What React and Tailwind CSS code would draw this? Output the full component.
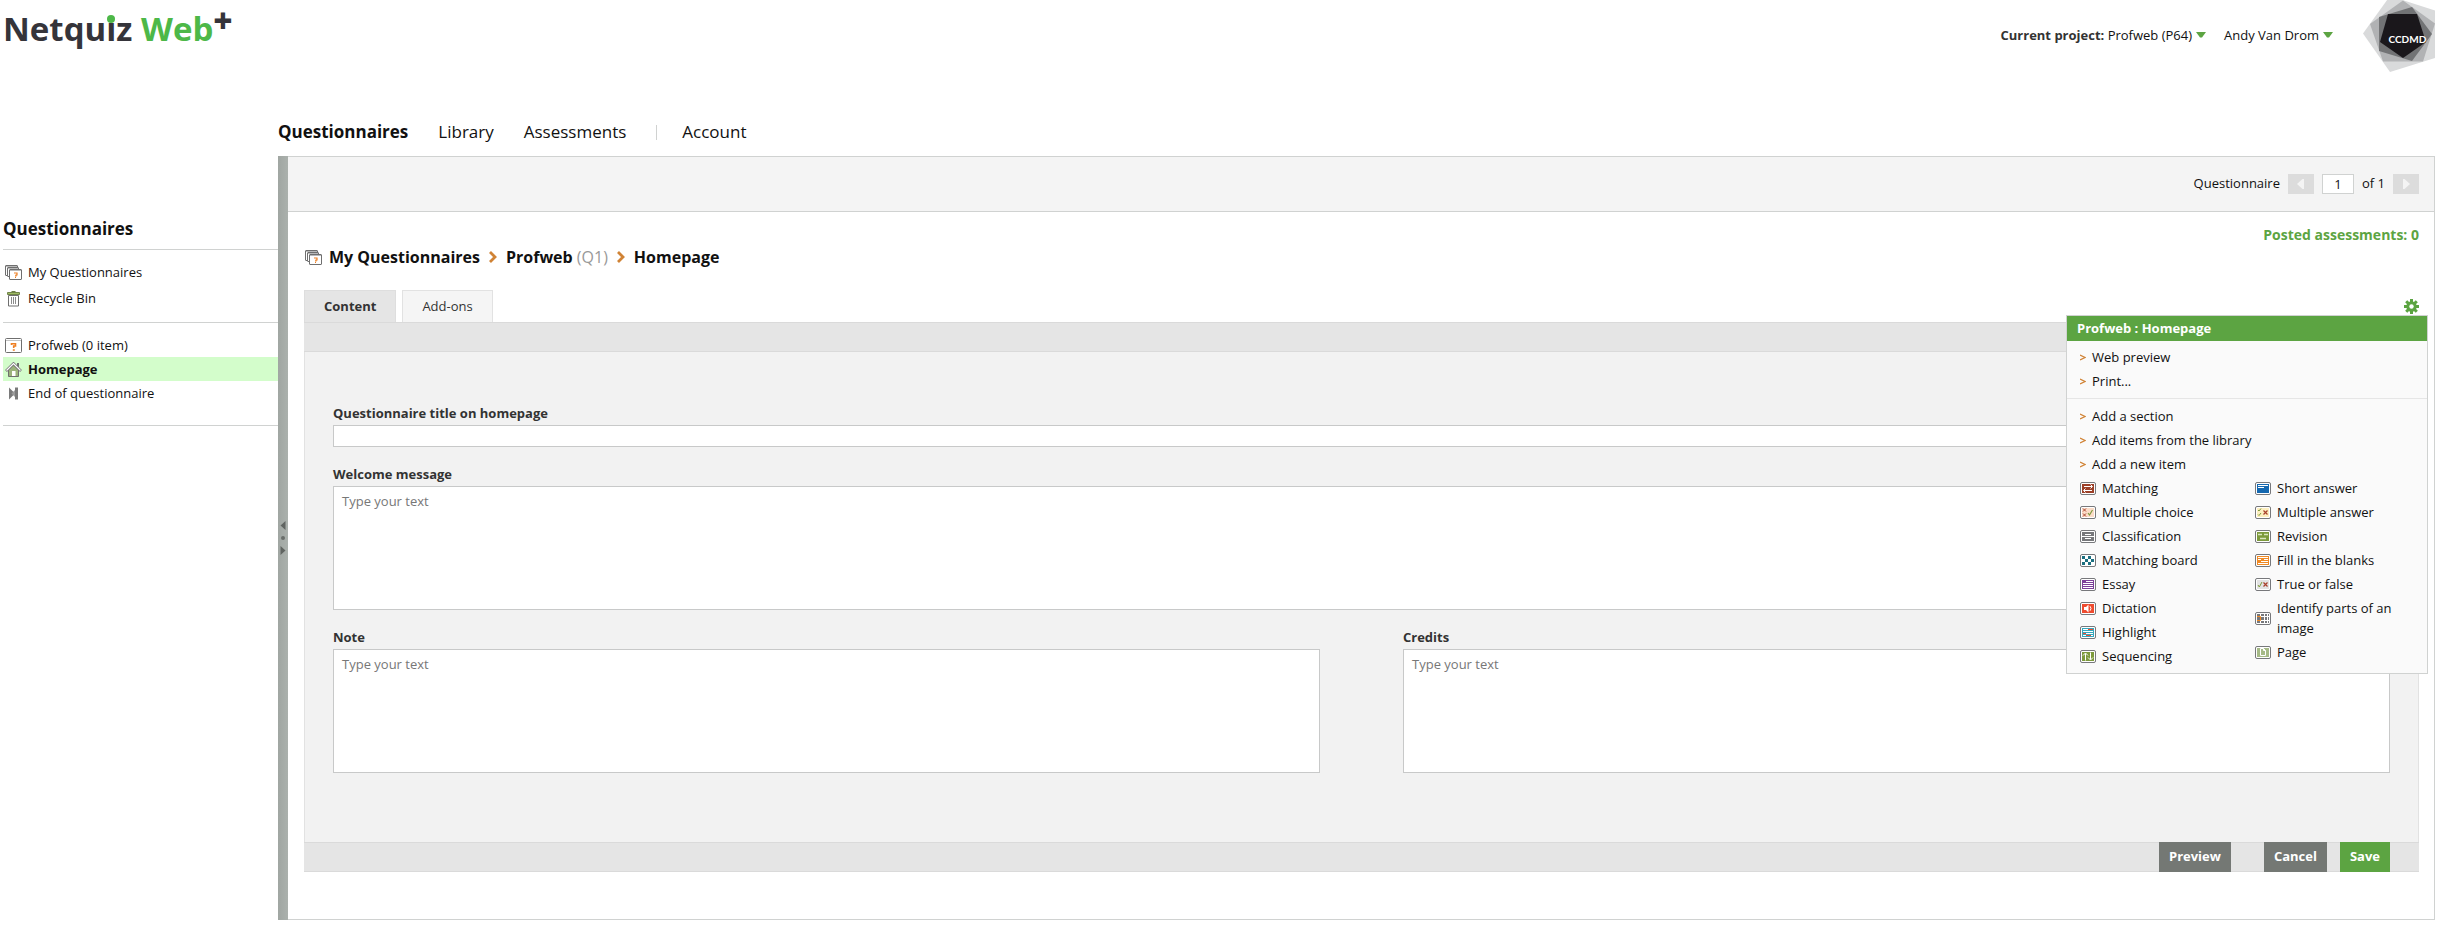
const link = 'flex items-center gap-[6px] pl-[2px] text-[13px] hover:underline'

function StackIcon() {
  return (
    <svg width="17" height="15" viewBox="0 0 17 15" className="shrink-0" aria-hidden="true">
      <g fill="#fff" stroke="#6f6f6f">
        <rect x="0.5" y="0.5" width="12" height="10" rx="0.5" />
        <rect x="2.5" y="2.5" width="11" height="9" rx="0.5" />
        <rect x="4.5" y="4.5" width="12" height="10" rx="0.5" />
      </g>
      <path d="M1 1.5h11M3 3.5h10M5 5.5h11" stroke="#b9b9b9" />
      <path d="M9 8h3v2h-1v1h-1M10 12.5h1" fill="none" stroke="#ee7f22" strokeWidth="1.2" />
    </svg>
  )
}

function BinIcon() {
  return (
    <svg width="17" height="17" viewBox="0 0 17 17" className="shrink-0" aria-hidden="true">
      <path d="M3.5 5.5h10v10.500h-10z" fill="#fff" stroke="#6f6f6f" />
      <path d="M6.500 1.500h4" stroke="#6c7f45" />
      <path d="M2.500 2.500h12v2h-12z" fill="#9fbb63" stroke="#71854a" />
      <path d="M6.500 7v7M8.500 7v7M10.500 7v7" stroke="#8c8c8c" />
    </svg>
  )
}

function QuizIcon() {
  return (
    <svg width="17" height="15" viewBox="0 0 17 15" className="shrink-0" aria-hidden="true">
      <rect x="0.5" y="0.5" width="16" height="14" rx="1" fill="#fff" stroke="#6f6f6f" />
      <path d="M1 2.5h15" stroke="#c4c4c4" strokeWidth="1" />
      <path d="M6.5 7V5.700h4V8H8.700v2M7.800 12h2" fill="none" stroke="#ee7f22" strokeWidth="1.6" />
    </svg>
  )
}

function HouseIcon() {
  return (
    <svg width="17" height="15" viewBox="0 0 17 15" className="shrink-0" aria-hidden="true">
      <path d="M13 1v5" stroke="#6f6f6f" strokeWidth="2" />
      <path d="M3.500 8L8.500 3l5 5v6.500h-10z" fill="#9bb37b" stroke="#6f6f6f" />
      <path d="M1 9L8.500 1.500 16 9" fill="none" stroke="#777" strokeWidth="2.600" />
      <path d="M1.500 8.500L8.500 1.600l7 6.900" fill="none" stroke="#fff" strokeWidth="1.200" />
      <rect x="7" y="9" width="3.500" height="5" fill="#fff" />
    </svg>
  )
}

function EndIcon() {
  return (
    <svg width="17" height="13" viewBox="0 0 17 13" className="shrink-0" aria-hidden="true">
      <path d="M4 0.5L10 6.5 4 12.5z" fill="#7a7a7a" />
      <path d="M10 3L6.5 6.5 10 10z" fill="#9a9a9a" />
      <path d="M10 0.5h3v12h-3z" fill="#7a7a7a" />
    </svg>
  )
}

function Caret() {
  return (
    <svg width="10" height="6" viewBox="0 0 10 6" aria-hidden="true">
      <path d="M0 0h10L6 5.5H4z" fill="#5ca442" />
    </svg>
  )
}

function Gear() {
  return (
    <svg width="15" height="15" viewBox="0 0 15 15" aria-hidden="true">
      <g stroke="#5ca442" strokeWidth="3">
        <path d="M7.5 0v15M0 7.5h15M2.2 2.2l10.6 10.6M12.8 2.2L2.2 12.8" />
      </g>
      <circle cx="7.5" cy="7.5" r="5.200" fill="#5ca442" />
      <circle cx="7.5" cy="7.5" r="2.200" fill="#fff" />
    </svg>
  )
}

function Crumb() {
  return (
    <svg width="8" height="12" viewBox="0 0 8 12" aria-hidden="true">
      <path d="M1 1l5 5-5 5" fill="none" stroke="#d08335" strokeWidth="2.8" />
    </svg>
  )
}

function BrandLogo() {
  return (
    <svg width="72" height="72" viewBox="0 0 72 72" className="shrink-0" role="img" aria-label="CCDMD">
      <path d="M0 33.5L27 -4 72 10.500V58L27 72z" fill="#d9dadb" />
      <path d="M7 24L40 0.500 72 23.500 60 61.500H20z" fill="#b1b2b4" />
      <path d="M16 17L49 7 69 34 49 61 16 51z" fill="#727375" />
      <path d="M25 14H54L63 42 40 58 17 42z" fill="#1a171b" />
      <text x="25.500" y="43" fill="#fff" fontFamily="Lato, sans-serif" fontWeight="700" fontSize="10">CCDMD</text>
    </svg>
  )
}

const art = {
  matching: (
    <>
      <rect x="2" y="2" width="12" height="9" fill="#9c3f27" />
      <path d="M4 4.500h8M10.500 2.500l2 2-2 2M12 8.500H4M5.500 6.500l-2 2 2 2" fill="none" stroke="#fff" />
    </>
  ),
  choice: (
    <>
      <rect x="2" y="2" width="12" height="9" fill="#fbdcc8" />
      <path d="M3 2.500l3 3M6 2.500l-3 3M3 7.500l3 3M6 7.500l-3 3" stroke="#a8402c" />
      <path d="M8 7l1.500 2L12.500 4" fill="none" stroke="#7d9a3c" strokeWidth="1.200" />
    </>
  ),
  classification: (
    <>
      <rect x="2" y="2" width="12" height="9" fill="#77787b" />
      <path d="M2 6.500h12" stroke="#fff" />
      <path d="M5 4.500h6M5 8.500h6" stroke="#fff" />
    </>
  ),
  board: (
    <>
      <rect x="2" y="2" width="12" height="9" fill="#fff" />
      <path d="M2 2h3v3H2zM8 2h3v3H8zM5 5h3v3H5zM11 5h3v3h-3zM2 8h3v3H2zM8 8h3v3H8z" fill="#1b6f80" />
    </>
  ),
  essay: (
    <>
      <rect x="2" y="2" width="12" height="9" fill="#7c3f98" />
      <path d="M6 3.500h7M3 5.500h10M3 7.500h10M3 9.500h10" stroke="#fff" />
    </>
  ),
  dictation: (
    <>
      <rect x="2" y="2" width="12" height="9" fill="#ee4b2f" />
      <path d="M4 5h2l2.500-2.500v8L6 8H4z" fill="#fff" />
      <path d="M10 4.200q2 2.300 0 4.600" fill="none" stroke="#fff" />
    </>
  ),
  highlight: (
    <>
      <rect x="2" y="2" width="12" height="9" fill="#35a7bd" />
      <path d="M3 3.500h5M3 5.500h10M6 7.500h7M3 9.500h10" stroke="#fff" />
      <path d="M8 3.500h5M3 7.500h3M6 9.500h5" stroke="#ee4b2f" />
    </>
  ),
  sequencing: (
    <>
      <rect x="2" y="2" width="12" height="9" fill="#7d9a3c" />
      <path d="M5.500 10.500v-7M3 5.500l2.500-2.500L8 5.500M10.500 2.500v7M8 7.500l2.500 2.500L13 7.500" fill="none" stroke="#fff" />
    </>
  ),
  short: (
    <>
      <rect x="2" y="2" width="12" height="9" fill="#1468b0" />
      <path d="M3 3.500h10M3 5.500h6" stroke="#fff" />
    </>
  ),
  multi: (
    <>
      <rect x="2" y="2" width="12" height="9" fill="#fdefc0" />
      <path d="M3 4l1 1 2-2.500M3 8.500l1 1L6 7" fill="none" stroke="#7d9a3c" />
      <path d="M8.500 4.500l4 4M12.500 4.500l-4 4" stroke="#a8402c" strokeWidth="1.200" />
    </>
  ),
  revision: (
    <>
      <rect x="2" y="2" width="12" height="9" fill="#7d9a3c" />
      <path d="M3 4.500h4M9 4.500h4M5 8.500h6" stroke="#dbe6c0" strokeWidth="1.600" />
    </>
  ),
  blanks: (
    <>
      <rect x="2" y="2" width="12" height="9" fill="#f08a24" />
      <path d="M3 3.500h10M3 5.500h3M6 7.500h7M3 9.500h10M9 5.500h4" stroke="#fff" />
    </>
  ),
  truth: (
    <>
      <rect x="2" y="2" width="12" height="9" fill="#e3e3e3" />
      <path d="M3 7l1.300 2L7 4" fill="none" stroke="#7d9a3c" />
      <path d="M8.500 4.500l4 4M12.500 4.500l-4 4" stroke="#a8402c" strokeWidth="1.200" />
    </>
  ),
  parts: (
    <>
      <rect x="2" y="2" width="12" height="9" fill="#77787b" />
      <path d="M2 4.500h12M2 8.500h12M5.500 2v9M9.500 2v9M12.500 2v9" stroke="#fff" />
      <path d="M2 4.500h3.500v4H2" fill="none" stroke="#f08a24" />
    </>
  ),
  page: (
    <>
      <rect x="2" y="2" width="12" height="9" fill="#a5b986" />
      <path d="M5.500 2.500h3l2 2v5h-5z" fill="#a5b986" stroke="#fff" />
      <path d="M8.500 2.500v2h2" fill="none" stroke="#fff" />
    </>
  ),
}

const leftItems = [
  ['matching', 'Matching'],
  ['choice', 'Multiple choice'],
  ['classification', 'Classification'],
  ['board', 'Matching board'],
  ['essay', 'Essay'],
  ['dictation', 'Dictation'],
  ['highlight', 'Highlight'],
  ['sequencing', 'Sequencing'],
]
const rightItems = [
  ['short', 'Short answer'],
  ['multi', 'Multiple answer'],
  ['revision', 'Revision'],
  ['blanks', 'Fill in the blanks'],
  ['truth', 'True or false'],
  ['parts', 'Identify parts of an image'],
  ['page', 'Page'],
]

function ItemList({ items }) {
  return (
    <ul>
      {items.map(([kind, name]) => (
        <li key={kind}>
          <a href="#" className="flex items-center gap-[6px] py-[2px] hover:underline">
            <svg width="16" height="13" viewBox="0 0 16 13" className="shrink-0" aria-hidden="true">
              <rect x="0.500" y="0.500" width="15" height="12" rx="1.500" fill="#fff" stroke="#77787b" />
              {art[kind]}
            </svg>
            <span>{name}</span>
          </a>
        </li>
      ))}
    </ul>
  )
}

function MenuLink({ children }) {
  return (
    <li>
      <a href="#" className="flex items-center gap-[6px] py-[2px] leading-[20px] hover:underline">
        <svg width="6" height="7" viewBox="0 0 6 7" aria-hidden="true">
          <path d="M0 1l5 2.500L0 6" fill="none" stroke="#d08335" strokeWidth="1.300" />
        </svg>
        {children}
      </a>
    </li>
  )
}

function ActionsMenu() {
  return (
    <div className="absolute top-full -right-[9px] mt-px w-[362px] border border-[#d0d2d1] bg-[#fafafa] pb-[5px] text-[13px] leading-[20px] text-[#111]">
      <h2 className="bg-[#5ca442] px-[10px] py-[2px] leading-[21px] font-bold text-white">Profweb : Homepage</h2>
      <ul className="border-b border-[#e6e6e6] px-[13px] pt-[4px] pb-[5px]">
        <MenuLink>Web preview</MenuLink>
        <MenuLink>Print...</MenuLink>
      </ul>
      <div className="px-[13px] pt-[5px]">
        <ul>
          <MenuLink>Add a section</MenuLink>
          <MenuLink>Add items from the library</MenuLink>
          <MenuLink>Add a new item</MenuLink>
        </ul>
        <div className="grid grid-cols-[175px_1fr]">
          <ItemList items={leftItems} />
          <ItemList items={rightItems} />
        </div>
      </div>
    </div>
  )
}

function Area({ id, label }) {
  return (
    <div className="flex flex-1 flex-col gap-[3px]">
      <label htmlFor={id} className="leading-[18px] font-bold">{label}</label>
      <textarea
        id={id}
        placeholder="Type your text"
        className="block h-[124px] w-full resize-none border border-[#c8c9c9] bg-white px-2 py-1 leading-[20px] placeholder:text-[#777]"
      />
    </div>
  )
}

export default function App() {
  return (
    <div className="bg-white pr-[3px] pb-3 pl-[3px] font-['Open_Sans','Noto_Sans',sans-serif] text-[13px] text-[#111]">
      <header className="flex items-start justify-between">
        <a href="#" className="mt-[7px] flex items-start text-[33px] leading-[44px] font-bold whitespace-pre text-[#35343a]">
          <span>
            Netqu
            <span className="relative">
              i
              <span className="absolute top-[9px] left-[1px] size-[8px] rounded-full bg-[#4db848]" />
            </span>
            z <span className="text-[#4db848]">Web</span>
          </span>
          <span className="-mt-[8px] font-extrabold">+</span>
        </a>
        <div className="flex items-start">
          <div className="flex gap-[18px] pt-[25px] pr-[30px] leading-[20px]">
            <button type="button" className="flex items-center gap-1">
              <span><b className="text-[#333]">Current project:</b> Profweb (P64)</span>
              <Caret />
            </button>
            <button type="button" className="flex items-center gap-1">
              Andy Van Drom
              <Caret />
            </button>
          </div>
          <BrandLogo />
        </div>
      </header>

      <nav className="mt-[48px] flex items-center pb-3 pl-[275px] text-[17px] leading-[24px]">
        <a href="#" className="mr-[30px] font-bold">Questionnaires</a>
        <a href="#" className="mr-[30px]">Library</a>
        <a href="#" className="mr-[30px]">Assessments</a>
        <span className="mr-[25px] h-[15px] w-px bg-[#d0d2d1]" />
        <a href="#">Account</a>
      </nav>

      <div className="flex">
        <aside className="w-[275px] shrink-0 pt-[61px]">
          <h2 className="border-b border-[#d0d2d1] pb-2 text-[17px] leading-[24px] font-bold">Questionnaires</h2>
          <ul className="border-b border-[#d0d2d1] pt-[9px] pb-[11px] leading-[26px]">
            <li><a href="#" className={link}><StackIcon />My Questionnaires</a></li>
            <li><a href="#" className={link}><BinIcon />Recycle Bin</a></li>
          </ul>
          <ul className="border-b border-[#d0d2d1] pt-[10px] pb-5 leading-[24px]">
            <li><a href="#" className={link}><QuizIcon />Profweb (0 item)</a></li>
            <li className="bg-[#d3fdcb] font-bold"><a href="#" className={link}><HouseIcon />Homepage</a></li>
            <li><a href="#" className={link}><EndIcon />End of questionnaire</a></li>
          </ul>
        </aside>

        <div className="flex w-[10px] shrink-0 flex-col items-center justify-center gap-[6px] bg-linear-to-r from-[#a0a6a2] to-[#abb1ad]">
          <svg width="6" height="9" viewBox="0 0 6 9" aria-hidden="true"><path d="M5.500 0v9L0.500 4.500z" fill="#616562" /></svg>
          <span className="size-1 rounded-full bg-[#6a6e6b]" />
          <svg width="6" height="9" viewBox="0 0 6 9" aria-hidden="true"><path d="M0.500 0v9l5-4.500z" fill="#616562" /></svg>
        </div>

        <main className="min-w-0 flex-1 border-y border-r border-[#d0d2d1]">
          <div className="flex items-center justify-end border-b border-[#d0d2d1] bg-[#f4f4f4] py-[17px] pr-[15px]">
            <label htmlFor="page-number" className="mr-2">Questionnaire</label>
            <button type="button" aria-label="Previous" className="grid h-5 w-[26px] place-items-center bg-[#dcdcdc]">
              <svg width="7" height="10" viewBox="0 0 7 10" aria-hidden="true"><path d="M7 0v10H5.500L0 5l5.500-5z" fill="#f4f4f4" /></svg>
            </button>
            <input id="page-number" defaultValue="1" className="mx-2 h-5 w-8 border border-[#d0d2d1] bg-white text-center" />
            <span>of 1</span>
            <button type="button" aria-label="Next" className="ml-2 grid h-5 w-[26px] place-items-center bg-[#dcdcdc]">
              <svg width="7" height="10" viewBox="0 0 7 10" aria-hidden="true"><path d="M0 0v10h1.500L7 5 1.500 0z" fill="#f4f4f4" /></svg>
            </button>
          </div>

          <div className="px-[15px] pt-[13px] pb-[47px] pl-[16px]">
            <p className="text-right text-[14px] leading-[20px] font-bold text-[#5ca442]">Posted assessments: 0</p>
            <div className="flex items-center text-[16px] leading-[24px] font-bold">
              <span className="mr-[7px] pl-px"><StackIcon /></span>
              <a href="#" className="mr-[9px]">My Questionnaires</a>
              <Crumb />
              <a href="#" className="mx-[9px]">Profweb <span className="font-normal text-[#999]">(Q1)</span></a>
              <Crumb />
              <span className="ml-[9px]">Homepage</span>
            </div>

            <div className="mt-[21px] flex items-end justify-between">
              <div className="flex gap-[6px] leading-[30px]">
                <button type="button" className="border border-b-0 border-[#dedede] bg-[#e5e5e5] px-[19px] pb-px font-bold text-[#333]">Content</button>
                <button type="button" className="border border-b-0 border-[#e2e2e2] bg-[#f5f5f5] px-[19px] pb-px text-[#333]">Add-ons</button>
              </div>
              <div className="relative z-10 pb-2">
                <button type="button" aria-label="Actions" className="-mb-2 block pb-2"><Gear /></button>
                <div className="relative -mt-px"><ActionsMenu /></div>
              </div>
            </div>

            <div className="h-[30px] border-y border-[#dadada] bg-[#e5e5e5]" />
            <form className="border-x border-[#e2e2e2] bg-[#f2f2f2] px-[28px] pt-[52px] pb-[69px] text-[#333]">
              <div className="flex flex-col gap-[18px]">
                <div className="flex flex-col gap-[3px]">
                  <label htmlFor="title" className="leading-[18px] font-bold">Questionnaire title on homepage</label>
                  <input id="title" className="h-[22px] w-full border border-[#c8c9c9] bg-white px-2" />
                </div>
                <Area id="welcome" label="Welcome message" />
                <div className="flex gap-[83px]">
                  <Area id="note" label="Note" />
                  <Area id="credits" label="Credits" />
                </div>
              </div>
            </form>
            <div className="flex h-[30px] justify-end border-y border-[#dadada] bg-[#e5e5e5] pr-[29px] font-bold text-white">
              <button type="button" className="-my-px mr-[33px] bg-[#747874] px-[10px]">Preview</button>
              <button type="button" className="-my-px mr-[13px] bg-[#747874] px-[10px]">Cancel</button>
              <button type="submit" className="-my-px bg-[#5ca442] px-[10px]">Save</button>
            </div>
          </div>
        </main>
      </div>
    </div>
  )
}
